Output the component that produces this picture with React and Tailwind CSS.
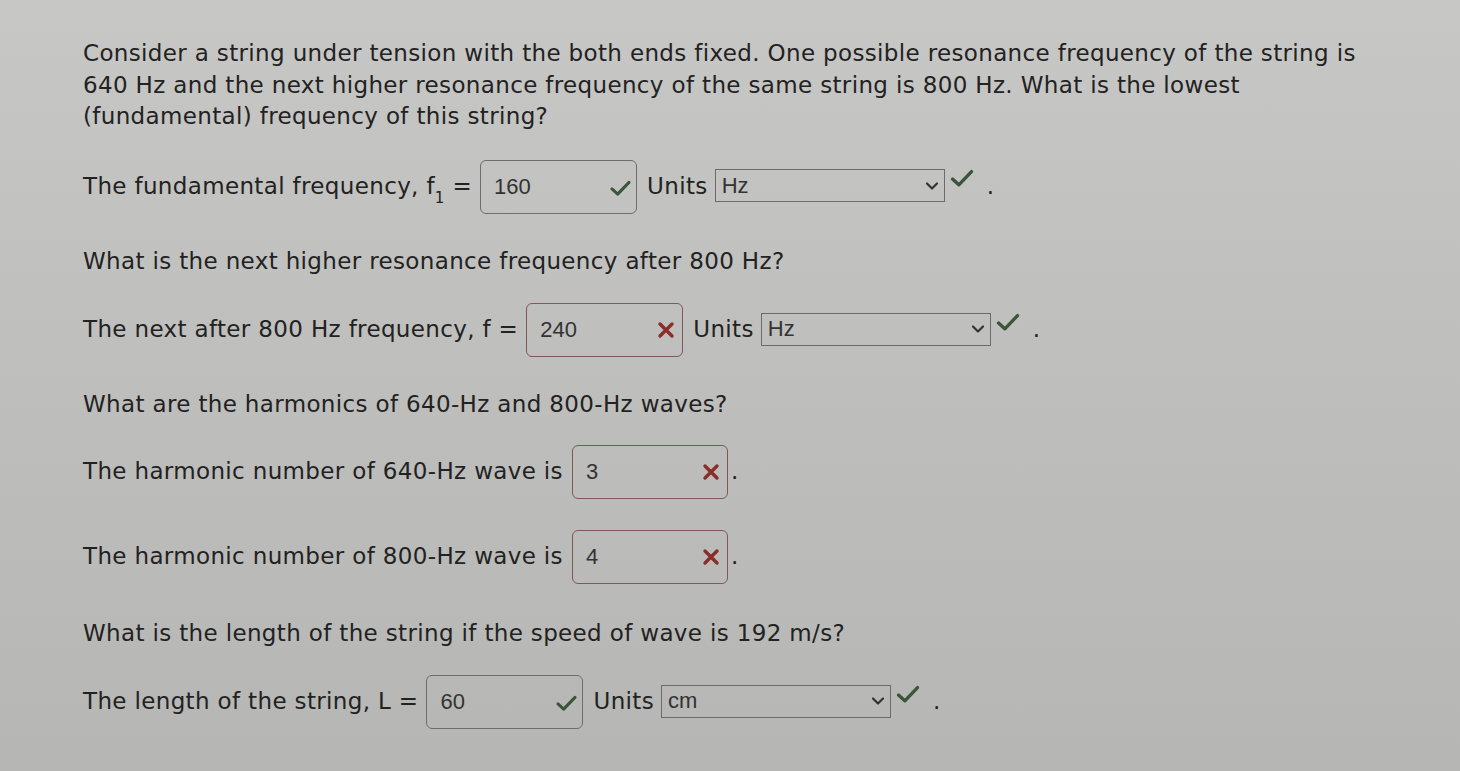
import React from "react";

const Check = ({ className = "" }) => (
  <svg viewBox="0 0 22 18" className={className} fill="none">
    <path d="M2 9.5 L8 15 L20 2.5" stroke="#3b553c" strokeWidth="3.2" strokeLinecap="round" strokeLinejoin="round" />
  </svg>
);

const Cross = ({ className = "" }) => (
  <svg viewBox="0 0 18 18" className={className} fill="none">
    <path d="M3 3 L15 15 M15 3 L3 15" stroke="#8b2d2b" strokeWidth="3.4" strokeLinecap="round" />
  </svg>
);

const Chevron = () => (
  <svg viewBox="0 0 14 10" className="w-[14px] h-[10px]" fill="none">
    <path d="M2 2.5 L7 7.5 L12 2.5" stroke="#333" strokeWidth="2.2" strokeLinecap="round" strokeLinejoin="round" />
  </svg>
);

const Box = ({ value, ok, w = "w-[157px]" }) => (
  <div
    className={`${w} h-[54px] rounded-[6px] border-[1.5px] ${ok ? "border-[#6e6e68]" : "border-[#7a5b56]"} flex items-center justify-between pl-[13px] pr-[5px] shrink-0`}
  >
    <span className="text-[22px] text-[#333] tracking-normal" style={{ fontFamily: '"Liberation Sans", Arial, sans-serif' }}>
      {value}
    </span>
    {ok ? <Check className="w-[21px] h-[17px] mt-[3px]" /> : <Cross className="w-[18px] h-[18px] mr-[2px]" />}
  </div>
);

const Select = ({ value }) => (
  <div className="w-[230px] h-[33px] border border-[#6b6b6b] border-l-[1.5px] flex items-center justify-between pl-[6px] pr-[5px] shrink-0">
    <span className="text-[22px] text-[#333] tracking-normal" style={{ fontFamily: '"Liberation Sans", Arial, sans-serif' }}>
      {value}
    </span>
    <Chevron />
  </div>
);

const UnitsRow = ({ label, value, ok, unit }) => (
  <div className="flex items-center">
    <span className="whitespace-nowrap">{label}</span>
    <div className="ml-[8px]">
      <Box value={value} ok={ok} />
    </div>
    <span className="ml-[10px]">Units</span>
    <div className="ml-[7px] mb-[2px]">
      <Select value={unit} />
    </div>
    <Check className="w-[24px] h-[19px] ml-[5px] mb-[16px]" />
    <span className="ml-[13px]">.</span>
  </div>
);

const HarmRow = ({ label, value }) => (
  <div className="flex items-center">
    <span className="whitespace-nowrap">{label}</span>
    <div className="ml-[9px]">
      <Box value={value} ok={false} w="w-[156px]" />
    </div>
    <span className="ml-[3px]">.</span>
  </div>
);

export default function App() {
  return (
    <div
      className="min-h-screen w-full bg-gradient-to-b from-[#c7c7c5] via-[#bebebc] to-[#b6b6b4] text-[#222] text-[23px] leading-[31.5px] pl-[83px] pt-[38px] overflow-hidden"
      style={{ fontFamily: '"DejaVu Sans", Verdana, sans-serif', letterSpacing: "0.35px", height: 771 }}
    >
      <p className="whitespace-nowrap">
        Consider a string under tension with the both ends fixed. One possible resonance frequency of the string is
        <br />
        640 Hz and the next higher resonance frequency of the same string is 800 Hz. What is the lowest
        <br />
        (fundamental) frequency of this string?
      </p>

      <div className="mt-[27px]">
        <UnitsRow
          label={
            <>
              The fundamental frequency, f<sub className="text-[15px] align-[-5px]">1</sub> =
            </>
          }
          value="160"
          ok={true}
          unit="Hz"
        />
      </div>

      <p className="mt-[32px]">What is the next higher resonance frequency after 800 Hz?</p>

      <div className="mt-[26px]">
        <UnitsRow label="The next after 800 Hz frequency, f =" value="240" ok={false} unit="Hz" />
      </div>

      <p className="mt-[32px]">What are the harmonics of 640-Hz and 800-Hz waves?</p>

      <div className="mt-[24px]">
        <HarmRow label="The harmonic number of 640-Hz wave is" value="3" />
      </div>
      <div className="mt-[31px]">
        <HarmRow label="The harmonic number of 800-Hz wave is" value="4" />
      </div>

      <p className="mt-[34px]">What is the length of the string if the speed of wave is 192 m/s?</p>

      <div className="mt-[26px]">
        <UnitsRow label="The length of the string, L =" value="60" ok={true} unit="cm" />
      </div>
    </div>
  );
}
